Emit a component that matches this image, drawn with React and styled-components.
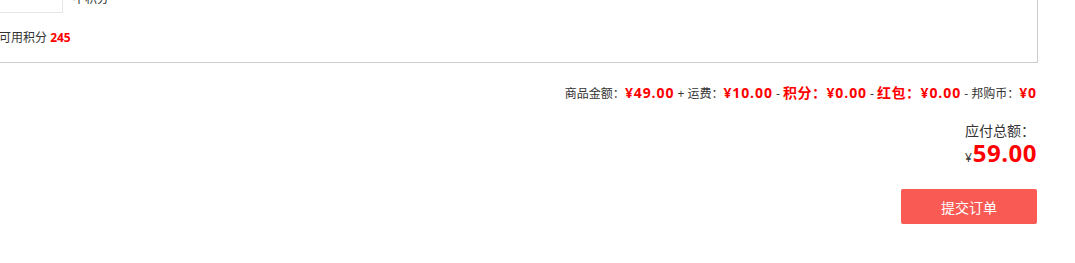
import styled, { createGlobalStyle } from "styled-components";

const GlobalStyle = createGlobalStyle`
  html, body {
    margin: 0;
    padding: 0;
    background: #fff;
    overflow: hidden;
  }
  body {
    font-family: "Microsoft YaHei", "Open Sans", "Noto Sans CJK SC", sans-serif;
    font-size: 12px;
    color: #333;
    text-spacing-trim: space-all;
  }
`;

const Page = styled.div`
  width: 1098px;
  margin: -48px 0 0 -60px;
`;

const PointsBox = styled.section`
  border: 1px solid #ccc;
  padding: 29px 20px 15px;
`;

const PointsRow = styled.div`
  display: flex;
  align-items: center;
  gap: 10px;
`;

const PointsInput = styled.input`
  box-sizing: border-box;
  width: 102px;
  height: 31px;
  border: 1px solid #e6e6e6;
  outline: none;
  padding: 0 8px;
`;

const PointsLabel = styled.span`
  font-size: 12px;
  color: #333;
`;

const HintRow = styled.p`
  margin: 16px 0 0;
  padding-left: 38px;
  line-height: 18px;
  font-size: 12px;
`;

const Strong = styled.b`
  color: #f00;
  font-weight: 700;
`;

const Summary = styled.div`
  display: flex;
  flex-direction: column;
  align-items: flex-end;
  padding-right: 1px;
`;

const FeeLine = styled.p`
  margin: 20px 0 0;
  font-size: 12px;
  line-height: 20px;
  white-space: nowrap;
`;

const Value = styled.span`
  color: #f00;
  font-size: 14px;
  font-weight: 700;
  letter-spacing: 0.9px;
`;

const RedLabel = styled.span`
  color: #f00;
  font-size: 14px;
  font-weight: 700;
  letter-spacing: 0.5px;
`;

const TotalLabel = styled.div`
  margin-top: 18px;
  font-size: 14px;
  line-height: 18px;
  padding-right: 2px;
`;

const TotalAmount = styled.div`
  display: flex;
  align-items: baseline;
  margin-top: 1px;
  line-height: 24px;
`;

const Yen = styled.span`
  font-size: 12px;
  margin-right: 1px;
`;

const Big = styled.span`
  color: #f00;
  font-size: 24px;
  font-weight: 700;
  letter-spacing: 0.5px;
`;

const SubmitButton = styled.button`
  margin-top: 19px;
  width: 136px;
  height: 35px;
  border: 0;
  border-radius: 2px;
  background: #fa5a54;
  color: #fff;
  font-family: inherit;
  font-size: 14px;
  cursor: pointer;
`;

export default function App() {
  return (
    <>
      <GlobalStyle />
      <Page>
        <PointsBox>
          <PointsRow>
            <PointsInput type="text" />
            <PointsLabel>不积分</PointsLabel>
          </PointsRow>
          <HintRow>
            可用积分 <Strong>245</Strong>
          </HintRow>
        </PointsBox>
        <Summary>
          <FeeLine>
            商品金额：<Value>¥49.00</Value> + 运费：<Value>¥10.00</Value> -{" "}
            <RedLabel>积分：</RedLabel>
            <Value>¥0.00</Value> - <RedLabel>红包：</RedLabel>
            <Value>¥0.00</Value> - 邦购币：<Value>¥0</Value>
          </FeeLine>
          <TotalLabel>应付总额：</TotalLabel>
          <TotalAmount>
            <Yen>¥</Yen>
            <Big>59.00</Big>
          </TotalAmount>
          <SubmitButton>提交订单</SubmitButton>
        </Summary>
      </Page>
    </>
  );
}
